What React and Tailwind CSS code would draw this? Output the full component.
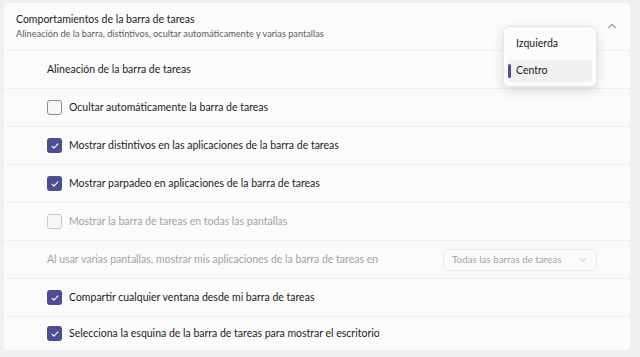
const Check = ({ checked, disabled }) => {
  if (checked) {
    return (
      <div className="w-[15px] h-[15px] rounded-[3px] bg-[#4f4d92] flex items-center justify-center">
        <svg viewBox="0 0 12 12" className="w-[10px] h-[10px]" fill="none" stroke="#ffffff" strokeWidth="1.3" strokeLinecap="round" strokeLinejoin="round">
          <path d="M2.5 6.3l2.3 2.2 4.7-5" />
        </svg>
      </div>
    );
  }
  return (
    <div
      className={
        "w-[15px] h-[15px] rounded-[3px] border bg-[#f7f7f7] " +
        (disabled ? "border-[#c8c8c8]" : "border-[#8b8b8b]")
      }
    />
  );
};

const Row = ({ children, last }) => (
  <div className={"flex items-center bg-[#fbfbfb] pl-[43px] pr-[33px] mt-px " + (last ? "h-[33px] rounded-b" : "h-[37px]")}>
    {children}
  </div>
);

const CheckRow = ({ label, checked, disabled, last }) => (
  <Row last={last}>
    <Check checked={checked} disabled={disabled} />
    <span className={"ml-[7px] text-[10.5px] whitespace-nowrap " + (disabled ? "text-[#a3a3a3]" : "text-[#1b1b1b]")}>{label}</span>
  </Row>
);

export default function App() {
  return (
    <div
      className="relative w-[640px] h-[357px] bg-[#f0f0f0] pt-[3px] pl-[4px] pr-[10px] overflow-hidden"
      style={{ fontFamily: 'Lato, "Noto Sans", sans-serif' }}
    >
      <div className="flex items-center justify-between h-[47px] bg-[#fbfbfb] rounded-t pl-[12px] pr-[13px]">
        <div className="flex flex-col">
          <span className="text-[10.5px] leading-[15px] text-[#1b1b1b]">Comportamientos de la barra de tareas</span>
          <span className="text-[9.2px] leading-[14px] text-[#5d5d5d]">
            Alineación de la barra, distintivos, ocultar automáticamente y varias pantallas
          </span>
        </div>
        <svg viewBox="0 0 12 12" className="w-[10px] h-[10px] -mt-[2px]" fill="none" stroke="#444" strokeWidth="1.1" strokeLinecap="round" strokeLinejoin="round">
          <path d="M2 8l4-4 4 4" />
        </svg>
      </div>
      <Row>
        <span className="text-[10.5px] text-[#1b1b1b]">Alineación de la barra de tareas</span>
      </Row>
      <CheckRow label="Ocultar automáticamente la barra de tareas" />
      <CheckRow label="Mostrar distintivos en las aplicaciones de la barra de tareas" checked />
      <CheckRow label="Mostrar parpadeo en aplicaciones de la barra de tareas" checked />
      <CheckRow label="Mostrar la barra de tareas en todas las pantallas" disabled />
      <Row>
        <div className="flex items-center justify-between w-full">
          <span className="text-[10.5px] whitespace-nowrap text-[#a3a3a3]">
            Al usar varias pantallas, mostrar mis aplicaciones de la barra de tareas en
          </span>
          <div className="flex items-center justify-between w-[154px] h-[22px] border border-[#ececec] rounded bg-[#fbfbfb] pl-[8px] pr-[9px]">
            <span className="text-[9.8px] whitespace-nowrap text-[#a3a3a3]">Todas las barras de tareas</span>
            <svg viewBox="0 0 12 12" className="w-[8px] h-[8px]" fill="none" stroke="#b0b0b0" strokeWidth="1.1" strokeLinecap="round" strokeLinejoin="round">
              <path d="M2 4l4 4 4-4" />
            </svg>
          </div>
        </div>
      </Row>
      <CheckRow label="Compartir cualquier ventana desde mi barra de tareas" checked />
      <CheckRow label="Selecciona la esquina de la barra de tareas para mostrar el escritorio" checked last />

      <div className="absolute left-[503px] top-[26px] w-[94px] h-[61px] bg-[#fcfcfc] rounded-md border border-[#e5e5e5] shadow-[0_4px_12px_rgba(0,0,0,0.14)] px-[4px] pt-[6px] flex flex-col gap-[5px]">
        <div className="h-[22px] flex items-center pl-[8px] text-[10.5px] text-[#1b1b1b]">Izquierda</div>
        <div className="relative h-[22px] flex items-center pl-[8px] rounded bg-[#f0f0f0] text-[10.5px] text-[#1b1b1b]">
          <div className="absolute left-0 top-[4px] w-[3px] h-[14px] rounded-full bg-[#4f4d92]" />
          Centro
        </div>
      </div>
    </div>
  );
}
